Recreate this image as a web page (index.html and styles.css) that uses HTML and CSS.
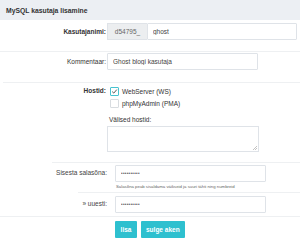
FILE: index.html
```html
<!DOCTYPE html>
<html lang="et">
<head>
    <meta charset="UTF-8">
    <title>MySQL kasutaja lisamine</title>
    <link rel="stylesheet" href="styles.css">
</head>
<body>
    <div class="panel">
        <div class="panel-title">MySQL kasutaja lisamine</div>

        <div class="row row-user">
            <label class="lbl strong">Kasutajanimi:</label>
            <div class="field">
                <div class="input-group">
                    <span class="prefix">d54795_</span>
                    <input type="text" class="inp inp-wide" value="ghost">
                </div>
            </div>
        </div>
        <div class="sep"></div>

        <div class="row row-comment">
            <label class="lbl">Kommentaar:</label>
            <div class="field">
                <input type="text" class="inp inp-mid" value="Ghost blogi kasutaja">
            </div>
        </div>
        <div class="sep sep-3"></div>

        <div class="row row-hosts">
            <label class="lbl strong">Hostid:</label>
            <div class="field">
                <div class="check-line">
                    <span class="box checked">
                        <svg width="7" height="7" viewBox="0 0 7 7"><path d="M1.2 3.6 L2.8 5.1 L5.8 1.6" fill="none" stroke="#444" stroke-width="0.9"/></svg>
                    </span>
                    <span>WebServer (WS)</span>
                </div>
                <div class="check-line">
                    <span class="box"></span>
                    <span>phpMyAdmin (PMA)</span>
                </div>
                <div class="sub-label">Välised hostid:</div>
                <div class="textarea">
                    <svg class="grip" width="5" height="5" viewBox="0 0 5 5"><path d="M1 5 L5 1 M3 5 L5 3" stroke="#aaa" stroke-width="0.7"/></svg>
                </div>
            </div>
        </div>
        <div class="sep sep-52"></div>

        <div class="row row-pass">
            <label class="lbl">Sisesta salasõna:</label>
            <div class="field">
                <input type="password" class="inp inp-pass" value="ghostpass1">
                <div class="hint">Salasõna peab sisaldama väikseid ja suuri tähti ning numbreid</div>
            </div>
        </div>
        <div class="sep sep-78"></div>

        <div class="row row-pass">
            <label class="lbl">» uuesti:</label>
            <div class="field">
                <input type="password" class="inp inp-pass" value="ghostpass1">
            </div>
        </div>
        <div class="sep"></div>

        <div class="actions">
            <button class="btn btn-add">lisa</button>
            <button class="btn">sulge aken</button>
        </div>
    </div>
</body>
</html>
```

FILE: styles.css
```css
body {
    margin: 0;
    font-family: 'Liberation Sans', Arial, sans-serif;
    font-size: 6.5px;
    color: #333;
    background: #fff;
}

.panel {
    width: 300px;
}

.panel-title {
    height: 20px;
    line-height: 21px;
    padding-left: 6px;
    background: #eceff3;
    font-weight: bold;
    font-size: 6.8px;
    color: #333;
}

/* read */
.row {
    display: flex;
    align-items: flex-start;
}

.sep {
    height: 1px;
    background: #eef0f2;
}

.sep-3 {
    margin-left: 3px;
}

.sep-52 {
    margin-left: 52px;
}

.sep-78 {
    margin-left: 78px;
}

.lbl {
    width: 107px;
    flex: none;
    text-align: right;
    padding-right: 1px;
    box-sizing: border-box;
    color: #333;
}

.lbl.strong {
    font-weight: bold;
}

.field {
    flex: 1;
}

.row-user {
    padding: 3px 0 11px 0;
}

.row-user .lbl {
    padding-top: 5px;
}

.row-comment {
    padding: 1px 0 12px 0;
}

.row-comment .lbl {
    padding-top: 5px;
}

.row-hosts {
    padding: 2px 0 10px 0;
}

.row-hosts .lbl {
    padding-top: 2px;
}

.row-pass {
    padding: 2px 0 3px 0;
}

.row-pass + .sep-78 + .row-pass {
    padding-top: 3px;
}

.row-pass .lbl {
    width: 115px;
    padding-right: 8px;
    padding-top: 4px;
    color: #444;
}

/* väljad */
.inp {
    box-sizing: border-box;
    height: 17px;
    border: 1px solid #dfe3e8;
    border-radius: 1px;
    padding: 0 5px;
    font-family: 'Liberation Sans', Arial, sans-serif;
    font-size: 6.5px;
    color: #444;
    background: #fff;
    margin: 0;
    outline: none;
}

.input-group {
    display: flex;
    width: 190px;
}

.prefix {
    box-sizing: border-box;
    width: 40px;
    height: 17px;
    line-height: 16px;
    text-align: center;
    background: #eceef0;
    border: 1px solid #dfe3e8;
    border-right: none;
    color: #666;
}

.inp-wide {
    width: 150px;
}

.inp-mid {
    width: 151px;
}

.inp-pass {
    display: block;
    width: 151px;
    height: 17px;
    font-size: 4.5px;
    letter-spacing: 0.3px;
    color: #555;
}

.check-line {
    display: flex;
    align-items: center;
    gap: 3px;
    height: 12px;
    padding-left: 3px;
    color: #333;
}

.box {
    box-sizing: border-box;
    width: 9px;
    height: 9px;
    border: 1px solid #d8dce0;
    border-radius: 1px;
    display: flex;
    align-items: center;
    justify-content: center;
    background: #fff;
}

.box.checked {
    border-color: #48c3d0;
}

.sub-label {
    padding: 7px 0 0 2px;
    color: #333;
}

.textarea {
    position: relative;
    box-sizing: border-box;
    width: 152px;
    height: 26px;
    margin-top: 3px;
    border: 1px solid #dfe3e8;
}

.grip {
    position: absolute;
    right: 1px;
    bottom: 1px;
}

.hint {
    font-size: 4.3px;
    color: #666;
    padding: 2px 0 0 1px;
    height: 5px;
}

/* nupud */
.actions {
    display: flex;
    gap: 4px;
    padding: 4px 0 0 115px;
}

.btn {
    height: 17px;
    padding: 0 5px;
    border: none;
    border-radius: 1px;
    background: #2ec0cf;
    color: #fff;
    font-family: 'Liberation Sans', Arial, sans-serif;
    font-weight: bold;
    font-size: 6.5px;
    cursor: pointer;
}

.btn-add {
    width: 22px;
    padding: 0;
}
```
